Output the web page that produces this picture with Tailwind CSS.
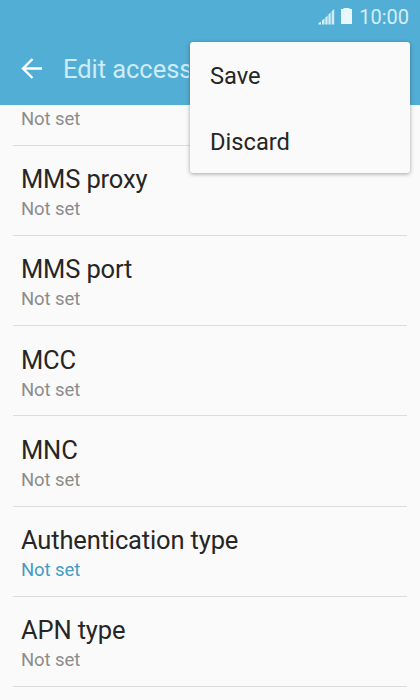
<!DOCTYPE html>
<html lang="en">
<head>
  <meta charset="UTF-8" />
  <meta name="viewport" content="width=device-width, initial-scale=1.0" />
  <title>Edit access point</title>
  <script src="https://cdn.jsdelivr.net/npm/@tailwindcss/browser@4"></script>
</head>
<body class="relative h-screen overflow-hidden bg-[#fafafa] font-['Roboto',sans-serif] text-[#262626]">
  <header class="h-[105px] bg-[#53aed5]">
    <!-- Status bar -->
    <div class="flex h-8 items-center justify-end pr-[11px] text-[#d3eefa]">
      <svg class="mr-[6px] h-[17px] w-[17px]" viewBox="0 0 17 17" fill="currentColor">
        <path d="M0.500 16.500V15l2.500-1.300v2.800zM4 16.500v-4l2.500-2v6zM7.300 16.500v-7l2.300-2v9zM10.400 16.500V6.500l2.300-2v12zM13.600 16.500V3.500L16.200 1v15.500z" />
      </svg>
      <svg class="mr-[7px] h-[17px] w-[11px]" viewBox="0 0 11 17" fill="#e9f7fd">
        <path d="M2.500 0h6v1H11v15H0V1h2.500z" />
      </svg>
      <span class="text-[20px] leading-8 pt-px">10:00</span>
    </div>
    <!-- Toolbar -->
    <div class="flex h-[73px] items-center pl-[21px]">
      <svg class="h-[22px] w-[22px]" viewBox="0 0 22 22" fill="none" stroke="#fff" stroke-width="2.300">
        <path d="M21 10.500H2M11.500 1L2 10.500l9.500 9.500" />
      </svg>
      <h1 class="ml-5 w-[126px] overflow-hidden text-[25.5px] leading-[30px] tracking-[-0.05px] whitespace-nowrap text-[#cdecf9]">Edit access</h1>
    </div>
  </header>

  <main class="px-[13px]">
    <div class="h-[41px] border-b border-[#dcdcdc] pl-2">
      <p class="pt-[3px] text-[18.5px] leading-[22px] tracking-[-0.1px] text-[#8c8c8c]">Not set</p>
    </div>
    <div class="h-[90.15px] border-b border-[#dcdcdc] pt-[18.3px] pl-2">
      <h2 class="text-[25.5px] leading-[31px] tracking-[-0.15px]">MMS proxy</h2>
      <p class="mt-[3px] text-[18.5px] leading-[22px] tracking-[-0.1px] text-[#8c8c8c]">Not set</p>
    </div>
    <div class="h-[90.15px] border-b border-[#dcdcdc] pt-[18.3px] pl-2">
      <h2 class="text-[25.5px] leading-[31px] tracking-[-0.15px]">MMS port</h2>
      <p class="mt-[3px] text-[18.5px] leading-[22px] tracking-[-0.1px] text-[#8c8c8c]">Not set</p>
    </div>
    <div class="h-[90.15px] border-b border-[#dcdcdc] pt-[18.3px] pl-2">
      <h2 class="text-[25.5px] leading-[31px] tracking-[-0.15px]">MCC</h2>
      <p class="mt-[3px] text-[18.5px] leading-[22px] tracking-[-0.1px] text-[#8c8c8c]">Not set</p>
    </div>
    <div class="h-[90.15px] border-b border-[#dcdcdc] pt-[18.3px] pl-2">
      <h2 class="text-[25.5px] leading-[31px] tracking-[-0.15px]">MNC</h2>
      <p class="mt-[3px] text-[18.5px] leading-[22px] tracking-[-0.1px] text-[#8c8c8c]">Not set</p>
    </div>
    <div class="h-[90.15px] border-b border-[#dcdcdc] pt-[18.3px] pl-2">
      <h2 class="text-[25.5px] leading-[31px] tracking-[-0.15px]">Authentication type</h2>
      <p class="mt-[3px] text-[18.5px] leading-[22px] tracking-[-0.1px] text-[#429dc3]">Not set</p>
    </div>
    <div class="h-[90.15px] border-b border-[#dcdcdc] pt-[18.3px] pl-2">
      <h2 class="text-[25.5px] leading-[31px] tracking-[-0.15px]">APN type</h2>
      <p class="mt-[3px] text-[18.5px] leading-[22px] tracking-[-0.1px] text-[#8c8c8c]">Not set</p>
    </div>
  </main>

  <!-- Overflow menu -->
  <div class="absolute top-[42px] left-[189.5px] h-[130.5px] w-[220px] rounded-[3px] bg-[#fafafa] pt-px pl-[20.5px] text-[23.7px] shadow-[0_1px_4px_rgba(0,0,0,0.35)]">
    <div class="flex h-[67px] items-center">Save</div>
    <div class="flex h-[65px] items-center">Discard</div>
  </div>
</body>
</html>
